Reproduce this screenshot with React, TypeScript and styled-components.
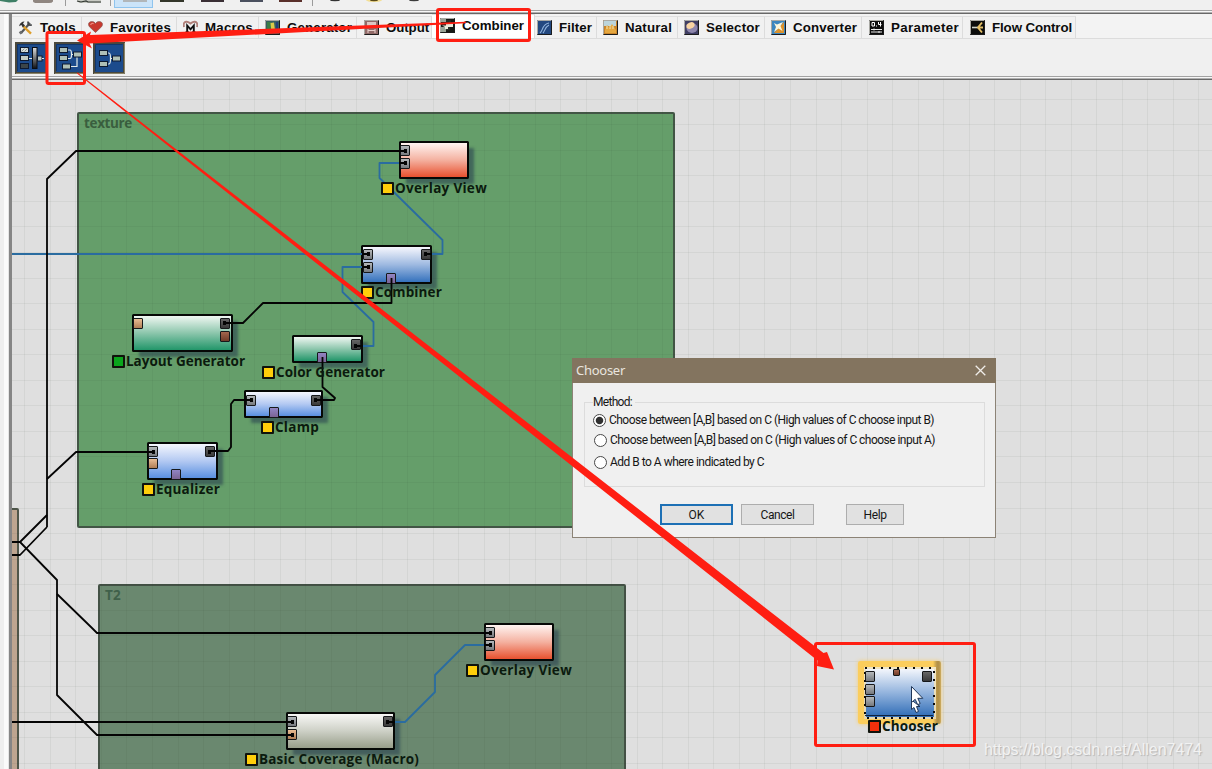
import React, { useLayoutEffect, useRef, useState } from 'react';
import styled, { createGlobalStyle } from 'styled-components';

const Global = createGlobalStyle`
  body { margin: 0; background: #f0f0f0; overflow: hidden; }
  * { box-sizing: border-box; }
`;

const RED = '#ff1e12';

/* Text that spreads its letters to fill a known width */
const FitSpan = styled.span`
  display: inline-block;
  white-space: pre;
`;

function Fit({ text, width }: { text: string; width: number }) {
  const ref = useRef<HTMLSpanElement>(null);
  const [spacing, setSpacing] = useState(0);
  useLayoutEffect(() => {
    if (ref.current) {
      const natural = ref.current.getBoundingClientRect().width;
      setSpacing((width - natural) / text.length);
    }
  }, [text, width]);
  return (
    <FitSpan ref={ref} style={{ letterSpacing: `${spacing}px` }}>
      {text}
    </FitSpan>
  );
}

const Window = styled.div`
  position: relative;
  width: 1212px;
  height: 769px;
  overflow: hidden;
  display: flex;
  flex-direction: column;
  background: #f0f0f0;
  font-family: 'Liberation Sans', sans-serif;
`;

const TopStrip = styled.div`
  height: 14px;
  flex: none;
  display: flex;
  flex-direction: column;
`;
const TopIcons = styled.svg`
  display: block;
  height: 10px;
  width: 1212px;
`;
const Ridge = styled.div`
  height: 4px;
  flex: none;
  background: linear-gradient(#a2a2a2 0 1px, #f7f7f7 1px 2px, #b0b0b0 2px 3px, #686868 3px 4px);
`;

const Workspace = styled.div`
  flex: 1;
  min-height: 0;
  display: flex;
`;
const Gutter = styled.div`
  width: 9px;
  flex: none;
  background: linear-gradient(90deg, #eeeeee 0 4px, #fafafa 4px 8px, #e4e4e4 8px 9px);
`;
const Main = styled.div`
  flex: 1;
  min-width: 0;
  display: flex;
  flex-direction: column;
  border-left: 3px solid #858585;
`;

const TabRow = styled.div`
  height: 25px;
  flex: none;
  display: flex;
  align-items: flex-end;
  background: #f3f3f3;
  border-bottom: 1px solid #dcdcdc;
`;
const Tab = styled.div<{ $w: number; $pad: number; $active?: boolean }>`
  width: ${(p) => p.$w}px;
  height: ${(p) => (p.$active ? 24 : 22)}px;
  padding-left: ${(p) => p.$pad}px;
  padding-bottom: ${(p) => (p.$active ? 2 : 0)}px;
  flex: none;
  display: flex;
  align-items: center;
  gap: 7px;
  background: ${(p) => (p.$active ? '#ffffff' : '#f1f1f1')};
  border-right: 1px solid #dcdcdc;
  border-top: 1px solid #e0e0e0;
  font: bold 13.3px/18px 'Liberation Sans', sans-serif;
  color: #0c0c0c;
`;
const TabIcon = styled.svg`
  width: 15px;
  height: 15px;
  flex: none;
`;

const ToolRow = styled.div`
  height: 37px;
  flex: none;
  display: flex;
  gap: 7px;
  padding: 3px 0 0 3px;
`;
const ToolIcon = styled.svg`
  width: 32px;
  height: 32px;
  display: block;
`;

const Canvas = styled.div`
  flex: 1;
  min-height: 0;
  position: relative;
  overflow: hidden;
  background: #dfdfdf;
`;
const Scene = styled.div`
  position: absolute;
  left: -12px;
  top: -80px;
  width: 1212px;
  height: 769px;
`;
const Layer = styled.svg`
  position: absolute;
  left: 0;
  top: 0;
  pointer-events: none;
`;

const Group = styled.div<{ $x: number; $y: number; $w: number; $h: number; $bg: string; $ink?: string }>`
  position: absolute;
  left: ${(p) => p.$x}px;
  top: ${(p) => p.$y}px;
  width: ${(p) => p.$w}px;
  height: ${(p) => p.$h}px;
  background: ${(p) => p.$bg};
  border: 2px solid rgba(60, 72, 62, 0.85);
  border-radius: 2px;
  padding: 0 5px;
  font: bold 13.5px/18px 'Open Sans', sans-serif;
  color: ${(p) => p.$ink ?? '#3a5f3f'};
`;

const fills = {
  red: 'linear-gradient(#fff4f1, #f4b1a0 50%, #e8512f)',
  blue: 'linear-gradient(#f6f7fd, #9fbae1 50%, #3572bd)',
  sky: 'linear-gradient(#f5f7fe, #b3c9f2 50%, #5a90e0)',
  green: 'linear-gradient(#f0f7f2, #8cc6ac 50%, #22966a)',
  stone: 'linear-gradient(#f8f8f6, #cdd0c6 50%, #989e8a)',
};

const NodeBox = styled.div<{ $x: number; $y: number; $w: number; $h: number; $fill: string }>`
  position: absolute;
  left: ${(p) => p.$x}px;
  top: ${(p) => p.$y}px;
  width: ${(p) => p.$w}px;
  height: ${(p) => p.$h}px;
  background: ${(p) => p.$fill};
  border: 2px solid #060806;
  border-radius: 1.5px;
  box-shadow: 6px 6px 3px -1px rgba(42, 66, 80, 0.6);
`;

const portFills = {
  grey: 'linear-gradient(#b4b8bb, #76797d)',
  dark: 'linear-gradient(#666, #383838)',
  tan: 'linear-gradient(#e9bd94, #b07e55)',
  brown: 'linear-gradient(#a4664e, #703b28)',
  violet: 'linear-gradient(#9184c4, #7b6494)',
};
const Port = styled.div<{ $x: number; $y: number; $kind: keyof typeof portFills; $s?: number }>`
  position: absolute;
  left: ${(p) => p.$x}px;
  top: ${(p) => p.$y}px;
  width: ${(p) => p.$s ?? 10}px;
  height: ${(p) => p.$s ?? 11}px;
  background: ${(p) => portFills[p.$kind]};
  border: 1px solid #16181a;
  border-radius: 1px;
`;

const NodeLabel = styled.div<{ $x: number; $y: number }>`
  position: absolute;
  left: ${(p) => p.$x}px;
  top: ${(p) => p.$y}px;
  height: 14px;
  display: flex;
  align-items: center;
  gap: 1px;
  white-space: nowrap;
  font: bold 13.5px/14px 'Open Sans', sans-serif;
  color: #0b1a0e;
`;
const Swatch = styled.i<{ $c: string }>`
  width: 13px;
  height: 13px;
  flex: none;
  background: ${(p) => p.$c};
  border: 2px solid #10130c;
  border-radius: 1px;
`;

const Selection = styled.div`
  position: absolute;
  left: 858px;
  top: 661px;
  width: 83px;
  height: 63px;
  border-radius: 2px;
  background: linear-gradient(90deg, #fbcd5c 0 75px, #b3924a 79px 81px, #cfae62);
  box-shadow: 0 0 4px #f5ce74;
`;
const ChooserBody = styled.div`
  position: absolute;
  left: 864px;
  top: 667px;
  width: 72px;
  height: 52px;
  background: linear-gradient(#f3f6fc, #92b3dd 50%, #2f6cb6) padding-box, linear-gradient(#f1e6c4, #e4d6b0) border-box;
  border: 2px solid transparent;
`;

type PortDef = [number, number, keyof typeof portFills];
type NodeDef = {
  x: number; y: number; w: number; h: number;
  fill: keyof typeof fills;
  ports: PortDef[];
  label: string; lx: number; ly: number; lw: number;
  color?: string;
};

const nodes: NodeDef[] = [
  { x: 399, y: 141, w: 70, h: 38, fill: 'red', ports: [[400, 145, 'grey'], [400, 158, 'grey']], label: 'Overlay View', lx: 381, ly: 181, lw: 92 },
  { x: 361, y: 245, w: 71, h: 39, fill: 'blue', ports: [[363, 249, 'grey'], [363, 262, 'grey'], [421, 249, 'dark'], [386, 273, 'violet']], label: 'Combiner', lx: 361, ly: 285, lw: 67 },
  { x: 132, y: 314, w: 101, h: 38, fill: 'green', ports: [[133, 318, 'tan'], [220, 318, 'dark'], [220, 331, 'brown']], label: 'Layout Generator', lx: 112, ly: 354, lw: 119, color: '#0aa51c' },
  { x: 292, y: 335, w: 71, h: 28, fill: 'green', ports: [[351, 339, 'dark'], [317, 352, 'violet']], label: 'Color Generator', lx: 262, ly: 365, lw: 109 },
  { x: 244, y: 390, w: 79, h: 28, fill: 'sky', ports: [[246, 395, 'grey'], [311, 395, 'dark'], [269, 407, 'violet']], label: 'Clamp', lx: 261, ly: 420, lw: 44 },
  { x: 147, y: 442, w: 71, h: 38, fill: 'sky', ports: [[148, 446, 'grey'], [148, 458, 'tan'], [205, 446, 'dark'], [171, 469, 'violet']], label: 'Equalizer', lx: 142, ly: 482, lw: 64 },
  { x: 484, y: 623, w: 70, h: 38, fill: 'red', ports: [[485, 627, 'grey'], [485, 640, 'grey']], label: 'Overlay View', lx: 466, ly: 663, lw: 92 },
  { x: 286, y: 712, w: 109, h: 38, fill: 'stone', ports: [[287, 716, 'grey'], [287, 729, 'tan'], [383, 716, 'dark']], label: 'Basic Coverage (Macro)', lx: 245, ly: 752, lw: 160 },
];

const blackWires = [
  '12,542 20,542 47,515', '12,555 20,555 47,527', '20,542 57,580 57,695 93,731 97,735 292,735',
  '57,594 92,628 97,633 490,633', '12,722 292,722', '47,527 47,179 76,151 405,151', '47,479 76,452 154,452',
  '226,323 243,323 263,303 391.5,303 391.5,278', '322.5,357 322.5,387 335,398 334,400 317,400',
  '251,400 234,400 231,404 231,447 228,451 210,451',
];
const blueWires = [
  '12,254 368,254', '405,163 379.5,163 379.5,178 442.5,240 442.5,254 427,254',
  '368,267 342.5,267 342.5,292 373.5,322 373.5,346 358,346', '388,722 405,722 435,692 435,675 465,645 490,645',
];
/* Short stubs drawn over the ports where a wire is plugged in */
const plugs = [
  '399,151 406,151', '399,163 406,163', '362,254 369,254', '362,267 369,267', '424,254 432,254',
  '224,323 232,323', '355,346 363,346', '484,645 491,645', '387,722 395,722',
];
const sockets = [
  [404, 149], [404, 161], [367, 252], [367, 265], [424, 252], [223, 321], [354, 344], [250, 398],
  [314, 398], [152, 450], [208, 450], [489, 631], [489, 643], [291, 720], [291, 733], [386, 720],
];

const gridX = Array.from({ length: 47 }, (_, i) => Math.round(24.4 + i * 25.52));
const gridY = Array.from({ length: 27 }, (_, i) => Math.round(98.7 + i * 25.55));

const tabs: { name: string; w: number; pad: number; tw: number; active?: boolean }[] = [
  { name: 'Tools', w: 70, pad: 6, tw: 36 },
  { name: 'Favorites', w: 95, pad: 6, tw: 61 },
  { name: 'Macros', w: 82, pad: 6, tw: 48 },
  { name: 'Generator', w: 98, pad: 6, tw: 65 },
  { name: 'Output', w: 75, pad: 7, tw: 43 },
  { name: 'Combiner', w: 103, pad: 8, tw: 62, active: true },
  { name: 'Filter', w: 62, pad: 2, tw: 33 },
  { name: 'Natural', w: 81, pad: 6, tw: 47 },
  { name: 'Selector', w: 87, pad: 6, tw: 54 },
  { name: 'Converter', w: 97, pad: 6, tw: 64 },
  { name: 'Parameter', w: 101, pad: 7, tw: 68 },
  { name: 'Flow Control', w: 113, pad: 7, tw: 80 },
];

function TabGlyph({ name }: { name: string }) {
  const framed = (bg: string, body: React.ReactNode) => (
    <>
      <rect width="15" height="15" fill={bg} />
      <path d="M.5 14.5V.5H14.5" fill="none" stroke="#a9a9a4" />
      <path d="M.5 14.5H14.5V.5" fill="none" stroke="#1b1b1b" />
      {body}
    </>
  );
  let body: React.ReactNode = null;
  if (name === 'Tools')
    body = (
      <>
        <path d="M3 13L12 3" stroke="#55585a" strokeWidth="2.2" />
        <path d="M10 1.5l.4 3.4 3.4.2" stroke="#44474a" strokeWidth="1.8" fill="none" />
        <path d="M1.8 11.5l1.6 2.4" stroke="#6d6f70" strokeWidth="2.4" />
        <path d="M5 6L13 13.6" stroke="#dd9d28" strokeWidth="2.4" />
        <path d="M1 6.2C2 3 4 1.5 6.5 1.6L5 3.4l2 2-2.2 2L3.4 5z" fill="#333" />
      </>
    );
  if (name === 'Favorites')
    body = (
      <>
        <path d="M7.5 12.5L1.4 6.700C-.6 3.700 1.2 1.6 3.8 1.6c1.8 0 3 .8 3.700 2 .7-1.200 1.900-2 3.700-2 2.600 0 4.400 2.100 2.400 5.100z" fill="#c9392f" stroke="#8f5a55" strokeWidth=".8" />
        <path d="M2.6 5C3 3.3 4.6 3 5.6 3.8" stroke="#ef8d80" strokeWidth="1.2" fill="none" />
      </>
    );
  if (name === 'Macros')
    body = (
      <>
        <path d="M1 7C-.2 3 2 1.4 4 1.7c1.6.2 2.6 1 3.5 1.8.9-.8 1.9-1.6 3.5-1.8 2-.3 4.2 1.3 3 5.3" fill="none" stroke="#b0807a" strokeWidth="2" />
        <path d="M4.2 12V5.500L7.500 9.400 10.800 5.500V12" fill="none" stroke="#111" strokeWidth="1.900" />
        <path d="M2.600 12h3.200M9.200 12h3.200" stroke="#111" strokeWidth="1.400" />
      </>
    );
  if (name === 'Generator')
    body = framed('#355f62', <><path d="M2 2h4v11H2z" fill="#3c7d46" /><path d="M5.500 3l3.500-.5 1 8-3.500 2z" fill="#d9cb48" /><path d="M11 2h2v10h-2z" fill="#243f78" /></>);
  if (name === 'Output')
    body = framed('#916a68', <><rect x="3" y="2" width="9" height="5" fill="#dcc6c2" /><path d="M4 10.500h7M4 9v4M11 9v4" stroke="#e5cdc9" strokeWidth="1.1" /></>);
  if (name === 'Combiner')
    body = framed('#171915', <><path d="M1 1h5v3H1zM1 9h5v5H1z" fill="#98a397" /><path d="M6 3h4v4M6 11.500h3V8" stroke="#2d302b" strokeWidth="1.500" fill="none" /><path d="M2 7.500h4V5.500h7v3.500H8v2H5V9z" fill="#e9ecdc" /></>);
  if (name === 'Filter')
    body = framed('#23487f', <path d="M3 13C6 11 5 4 12 3M6 13c2-2 2-6 6-8" stroke="#93b5dd" fill="none" strokeWidth="1.1" />);
  if (name === 'Natural')
    body = framed('#c98429', <><rect x="1" y="1" width="12" height="5" fill="#bcd5dc" /><path d="M2 10l2-5 2.500 3L9 4l4 6v3H2z" fill="#e5a73f" /><path d="M4 6v3M7 5v4M10 6v3" stroke="#f2e2b0" /></>);
  if (name === 'Selector')
    body = framed('#403e63', <><ellipse cx="8" cy="8" rx="5.5" ry="5" fill="#8f87ad" /><ellipse cx="6.5" cy="5.5" rx="4.3" ry="3" transform="rotate(-25 6.5 5.5)" fill="#f9d4a1" /></>);
  if (name === 'Converter')
    body = framed('#3d86bf', <><path d="M13 2v11H3z" fill="#dc922c" /><path d="M3 3l3 1.500L12 2 9.500 6l2 5-4-2.500L3 12l2-5z" fill="#fdf7dc" /></>);
  if (name === 'Parameter')
    body = framed('#0c0c0c', <><path d="M3 2.500h2.500v3.500H3zM7 6h1M11.500 2v4.500M9.500 2v2.500h3" stroke="#fff" fill="none" /><path d="M2 9.500h11M2 12h11M5 8.500v2M10 11v2" stroke="#e9e9e9" /></>);
  if (name === 'Flow Control')
    body = framed('#0c0d0c', <><path d="M2 7.5h6" stroke="#cfd3c8" strokeWidth="1.6" /><path d="M12 2.500L8 7.500l4 5M8 7.5h5" stroke="#e3bf66" strokeWidth="1.9" fill="none" /></>);
  return <TabIcon viewBox="0 0 15 15">{body}</TabIcon>;
}

function ToolGlyph({ kind }: { kind: number }) {
  const box = (x: number, y: number, fill = '#aebfb6') => (
    <rect x={x} y={y} width="8" height="5" fill={fill} stroke="#0e1a30" strokeWidth="1" />
  );
  return (
    <ToolIcon viewBox="0 0 32 32">
      <rect x="1" y="1" width="30" height="30" fill="#1c4b8c" stroke="#4a483d" strokeWidth="2" />
      <path d="M2.5 29V2.5H29.5" fill="none" stroke="#12366b" />
      <path d="M1 31.5h30.500V1" fill="none" stroke="#8a8468" />
      {kind === 0 && (
        <>
          {box(5.5, 5.5, '#d8dedb')}{box(5.5, 13.5, '#c2cbc5')}{box(5.5, 21.5, '#3b4549')}
          <path d="M6.5 9.500l3-3M9.500 9.500l3-3" stroke="#8d9794" />
          <defs><linearGradient id="bar" x2="0" y2="1"><stop stopColor="#ddd" /><stop offset="1" stopColor="#0e1116" /></linearGradient></defs>
          <rect x="17.5" y="5.5" width="4.5" height="21" fill="url(#bar)" stroke="#0a0d12" />
          <rect x="22.500" y="14" width="4.500" height="5" fill="#b7c3c3" stroke="#0e1a30" />
          <path d="M14 16.5h3M27 16.5h2" stroke="#dfe5e5" />
        </>
      )}
      {kind === 1 && (
        <>
          <path d="M14 8h2q1.500 0 1.500 4.500h3M14 16.500h2q1.500 0 1.500-4M16 24.500h7V15" fill="none" stroke="#e3ebea" strokeWidth="1.2" />
          {box(5.5, 5.5)}{box(5.5, 13.5)}{box(8.5, 22)}{box(19.500, 10)}
        </>
      )}
      {kind === 2 && (
        <>
          <path d="M14 11h2q1.500 0 1.500 5.500T16 22h-2M17.500 16.500h3" fill="none" stroke="#e3ebea" strokeWidth="1.2" />
          {box(6.5, 8.5)}{box(6.5, 19.5)}{box(19.500, 14)}
        </>
      )}
    </ToolIcon>
  );
}

const Dialog = styled.div`
  position: absolute;
  left: 572px;
  top: 358px;
  width: 424px;
  height: 180px;
  display: flex;
  flex-direction: column;
  background: #f0f0f0;
  border: 1px solid #8c8376;
  font: 12px/14px Roboto, sans-serif;
  color: #161616;
`;
const TitleBar = styled.div`
  height: 25px;
  margin: -1px -1px 0;
  flex: none;
  display: flex;
  align-items: center;
  justify-content: space-between;
  padding: 0 10px 1px 4px;
  background: #83745f;
  color: #e9e5df;
  font: 13px/18px 'Noto Sans', sans-serif;
`;
const Method = styled.fieldset`
  height: 92px;
  margin: 12px 10px 0 11px;
  padding: 4px 0 0 8px;
  border: 1px solid #dcdcdc;
  display: flex;
  flex-direction: column;
  gap: 6px;
`;
const Legend = styled.legend`
  padding: 0 3px 0 0;
  height: 14px;
`;
const Option = styled.label<{ $shift?: number; $drop?: number }>`
  display: flex;
  align-items: center;
  gap: 3px;
  height: 14px;
  margin-left: ${(p) => p.$shift ?? 0}px;
  margin-top: ${(p) => p.$drop ?? 0}px;
`;
const Radio = styled.i<{ $on?: boolean }>`
  width: 13px;
  height: 13px;
  flex: none;
  border: 1px solid #484848;
  border-radius: 50%;
  background: ${(p) => (p.$on ? 'radial-gradient(circle, #303030 0 3.3px, #fff 4.2px)' : '#fff')};
`;
const Buttons = styled.div`
  display: flex;
  gap: 8px;
  padding: 17px 0 0 87px;
`;
const Button = styled.button<{ $w: number; $primary?: boolean; $apart?: boolean }>`
  width: ${(p) => p.$w}px;
  height: 21px;
  margin-left: ${(p) => (p.$apart ? 24 : 0)}px;
  padding: 0;
  background: #e1e1e1;
  border: ${(p) => (p.$primary ? '2px solid #1d70b5' : '1px solid #adadad')};
  font: inherit;
  color: inherit;
`;

const Watermark = styled.div`
  position: absolute;
  left: 984px;
  top: 740px;
  font: 16px/20px 'Liberation Sans', sans-serif;
  color: #f2f2f2;
  text-shadow: 1px 1px 1px #b4b4b4;
`;

export default function App() {
  return (
    <Window>
      <Global />
      <TopStrip>
        <TopIcons viewBox="0 0 1212 10">
          <path d="M0 0h18l-2 2-7 .5L0 1z" fill="#3e7f66" />
          <path d="M33 0h20v1.5q-1 1.5-4 1.5H37q-4 0-4-2z" fill="#8f8680" />
          <path d="M65.5 0v6M110.5 0v6M312.5 0v6" stroke="#9b9b9b" />
          <path d="M77 0h24v3H79z" fill="#c9cbc4" />
          <path d="M77 1l4 1 5-1 2 1h13" stroke="#303630" fill="none" strokeWidth="1.2" />
          <rect x="114.5" y="-2" width="38" height="9.5" fill="#cbe4f9" stroke="#8fc4ee" />
          <rect x="123" y="0" width="24" height="2" fill="#b1b6b9" />
          <rect x="160" width="24" height="2" fill="#33362a" />
          <rect x="201" width="23" height="2" fill="#3a2f35" />
          <rect x="240" width="23" height="2" fill="#4b515f" />
          <rect x="279" width="23" height="2" fill="#5a302b" />
          <ellipse cx="335" cy="0" rx="5" ry="1.2" fill="#333" />
          <ellipse cx="374" cy="0" rx="8" ry="2" fill="#f3df96" />
          <ellipse cx="374" cy="0" rx="4" ry="1.2" fill="#5b4a18" />
          <ellipse cx="414" cy="0" rx="5" ry="1.2" fill="#3c3c3c" />
        </TopIcons>
        <Ridge />
      </TopStrip>
      <Workspace>
        <Gutter />
        <Main>
          <TabRow>
            {tabs.map((t) => (
              <Tab key={t.name} $w={t.w} $pad={t.pad} $active={t.active}>
                <TabGlyph name={t.name} />
                <Fit text={t.name} width={t.tw} />
              </Tab>
            ))}
          </TabRow>
          <ToolRow>
            <ToolGlyph kind={0} />
            <ToolGlyph kind={1} />
            <ToolGlyph kind={2} />
          </ToolRow>
          <Ridge />
          <Canvas>
            <Scene>
              <Group $x={77} $y={112} $w={598} $h={416} $bg="#659e6a">
                <Fit text="texture" width={48} />
              </Group>
              <Group $x={98} $y={584} $w={528} $h={200} $bg="#6a886f" $ink="#40604a">
                <Fit text="T2" width={16} />
              </Group>
              <Group $x={5} $y={508} $w={13} $h={300} $bg="#bda590" />
              <Layer width="1212" height="769">
                <g stroke="#203028" strokeOpacity=".055" strokeWidth="1">
                  {gridX.map((x) => <path key={x} d={`M${x + 0.5} 80V769`} />)}
                  {gridY.map((y) => <path key={y} d={`M12 ${y + 0.5}H1212`} />)}
                </g>
              </Layer>
              {nodes.map((n) => (
                <NodeBox key={n.x} $x={n.x} $y={n.y} $w={n.w} $h={n.h} $fill={fills[n.fill]} />
              ))}
              {nodes.flatMap((n) => n.ports.map(([x, y, kind]) => <Port key={`${x}-${y}`} $x={x} $y={y} $kind={kind} />))}
              <Layer width="1212" height="769">
                <g fill="none" stroke="#2a6ca0" strokeWidth="1.8" strokeLinejoin="round">
                  {blueWires.map((p) => <polyline key={p} points={p} />)}
                </g>
                <g fill="none" stroke="#040404" strokeWidth="1.8" strokeLinejoin="round">
                  {blackWires.map((p) => <polyline key={p} points={p} />)}
                  {plugs.map((p) => <polyline key={p} points={p} strokeWidth="2" />)}
                </g>
                <g fill="#050505">
                  {sockets.map(([x, y]) => (
                    <rect key={`${x}-${y}`} x={x} y={y} width="3" height="4" />
                  ))}
                </g>
              </Layer>
              {nodes.map((n) => (
                <NodeLabel key={n.x} $x={n.lx} $y={n.ly}>
                  <Swatch $c={n.color ?? '#ffce0a'} />
                  <Fit text={n.label} width={n.lw} />
                </NodeLabel>
              ))}

              <Selection />
              <ChooserBody />
              <Port $x={865} $y={671} $kind="grey" />
              <Port $x={865} $y={684} $kind="grey" />
              <Port $x={865} $y={696} $kind="grey" />
              <Port $x={893} $y={669} $kind="brown" $s={7} />
              <Port $x={922} $y={671} $kind="dark" />
              <Layer width="1212" height="769">
                <rect x="865" y="668" width="69" height="50" fill="none" stroke="#0d0d0d" strokeWidth="2" strokeDasharray="2 6" />
                <path d="M865 715.5h68" stroke="#10223c" />
                <path d="M911.5 700v9.5l2.5-2 2 5 2.5-1-2-5h3.5z" fill="#fff" stroke="#1f3658" />
                <path d="M911.5 686.5v16l3.7-3.2 2.5 5.4 2.5-1.2-2.4-5.2h5z" fill="#fff" stroke="#1f3658" />
              </Layer>
              <NodeLabel $x={868} $y={719}>
                <Swatch $c="#f5300c" />
                <Fit text="Chooser" width={56} />
              </NodeLabel>

              <Dialog>
                <TitleBar>
                  <Fit text="Chooser" width={49} />
                  <svg width="11" height="11" viewBox="0 0 11 11">
                    <path d="M.7.7l9.6 9.6M10.3.7L.7 10.3" stroke="#f0ede9" strokeWidth="1.3" />
                  </svg>
                </TitleBar>
                <Method>
                  <Legend><Fit text="Method:" width={39} /></Legend>
                  <Option>
                    <Radio $on />
                    <Fit text="Choose between [A,B] based on C (High values of C choose input B)" width={325} />
                  </Option>
                  <Option $shift={1}>
                    <Radio />
                    <Fit text="Choose between [A,B] based on C (High values of C choose input A)" width={325} />
                  </Option>
                  <Option $shift={1} $drop={2}>
                    <Radio />
                    <Fit text="Add B to A where indicated by C" width={154} />
                  </Option>
                </Method>
                <Buttons>
                  <Button $w={73} $primary>OK</Button>
                  <Button $w={73}><Fit text="Cancel" width={34} /></Button>
                  <Button $w={58} $apart><Fit text="Help" width={23} /></Button>
                </Buttons>
              </Dialog>
              <Watermark><Fit text="https://blog.csdn.net/Allen7474" width={218} /></Watermark>
            </Scene>
          </Canvas>
        </Main>
      </Workspace>
      <Layer width="1212" height="769">
        <g fill="none" stroke={RED} strokeWidth="3">
          <rect x="437.5" y="9.5" width="92" height="31" rx="1.5" />
          <rect x="47" y="32.5" width="37.5" height="51" rx="1.5" />
          <rect x="815.5" y="643.5" width="159" height="102" rx="1.5" />
        </g>
        <g fill={RED}>
          <path d="M466 21.700L90 35L91 31.500L77 40.500L92 48.500L89.500 43.500L466 23.200Z" />
          <path d="M77.5 72.5L823.5 653L827 652L834 669.5L817 666L817.5 660.5L77 73.5Z" />
        </g>
      </Layer>
    </Window>
  );
}
